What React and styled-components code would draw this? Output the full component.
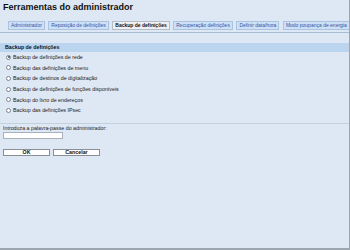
import React from 'react'
import styled, {createGlobalStyle} from 'styled-components'

const Global = createGlobalStyle`
    html, body {
        margin: 0;
        padding: 0;
        background: #dde8f4;
    }
    body {
        font-family: "Liberation Sans", Arial, sans-serif;
    }
`

const Page = styled.main`
    width: 350px;
    height: 250px;
    box-sizing: border-box;
    background: #dde8f4;
    border-right: 1px solid #9ca6b0;
    border-bottom: 2px solid #9ca6b0;
    overflow: hidden;
`

const Title = styled.h1`
    margin: 0;
    padding: 2px 0 0 3px;
    height: 19px;
    box-sizing: border-box;
    font-size: 9px;
    line-height: 10px;
    font-weight: bold;
    color: #111;
`

const Tabs = styled.nav`
    display: flex;
    gap: 3.5px;
    padding: 2px 0 0 8px;
    height: 11px;
    border-bottom: 1px solid #a9bdd2;
`

const Tab = styled.div`
    height: 9px;
    padding: 0 2px;
    font-size: 5px;
    line-height: 7px;
    white-space: nowrap;
    box-sizing: border-box;
    border: 1px solid ${p => p.$active ? '#b4bcc6' : '#a9c3e0'};
    background: ${p => p.$active ? '#eceff4' : '#cde0f5'};
    color: ${p => p.$active ? '#111' : '#3553a8'};
    font-weight: ${p => p.$active ? 'bold' : 'normal'};
`

const Section = styled.section`
    margin-top: 10px;
`

const SectionHeader = styled.h2`
    margin: 0;
    height: 9px;
    line-height: 9px;
    padding-left: 5px;
    background: #bad5ed;
    font-size: 5.3px;
    font-weight: bold;
    color: #111;
`

const Options = styled.ul`
    list-style: none;
    margin: 0;
    padding: 0 0 0 6px;
`

const Option = styled.li`
    display: flex;
    align-items: center;
    gap: 2px;
    height: 10.6px;
    font-size: 5.3px;
    color: #222;
`

const Radio = styled.span`
    width: 5px;
    height: 5px;
    box-sizing: border-box;
    border-radius: 50%;
    border: 1px solid #7b8590;
    background: #fff;
    display: flex;
    align-items: center;
    justify-content: center;
    &::after {
        content: '';
        width: 2px;
        height: 2px;
        border-radius: 50%;
        background: ${p => p.$checked ? '#3a4a40' : 'transparent'};
    }
`

const Divider = styled.hr`
    margin: 7px 0 0 0;
    border: 0;
    border-top: 1px solid #c3d1df;
`

const Form = styled.form`
    padding: 1px 0 0 3px;
`

const Label = styled.label`
    display: block;
    font-size: 5.3px;
    line-height: 7px;
    color: #222;
`

const Input = styled.input`
    display: block;
    width: 60px;
    height: 7px;
    box-sizing: border-box;
    margin: 0;
    padding: 0;
    border: 1px solid #a7b1bd;
    background: #fff;
`

const Buttons = styled.div`
    display: flex;
    gap: 3px;
    margin-top: 10px;
`

const Button = styled.button`
    width: 47px;
    height: 7px;
    margin: 0;
    padding: 0;
    box-sizing: border-box;
    border: 1px solid #8a8f96;
    background: #fff;
    font-family: "Liberation Sans", Arial, sans-serif;
    font-size: 5.3px;
    line-height: 5px;
    font-weight: bold;
    color: #111;
`

const tabs = [
    'Administrador',
    'Reposição de definições',
    'Backup de definições',
    'Recuperação definições',
    'Definir data/hora',
    'Modo poupança de energia',
]

const options = [
    'Backup de definições de rede',
    'Backup das definições de menu',
    'Backup de destinos de digitalização',
    'Backup de definições de funções disponíveis',
    'Backup do livro de endereços',
    'Backup das definições IPsec',
]

export default function App() {
    return (
        <Page>
            <Global />
            <Title>Ferramentas do administrador</Title>
            <Tabs>
                {tabs.map((t, i) => <Tab key={t} $active={i === 2}>{t}</Tab>)}
            </Tabs>
            <Section>
                <SectionHeader>Backup de definições</SectionHeader>
                <Options>
                    {options.map((o, i) => (
                        <Option key={o}><Radio $checked={i === 0} />{o}</Option>
                    ))}
                </Options>
                <Divider />
                <Form onSubmit={e => e.preventDefault()}>
                    <Label>Introduza a palavra-passe do administrador:</Label>
                    <Input type="password" />
                    <Buttons>
                        <Button type="button">OK</Button>
                        <Button type="button">Cancelar</Button>
                    </Buttons>
                </Form>
            </Section>
        </Page>
    )
}
